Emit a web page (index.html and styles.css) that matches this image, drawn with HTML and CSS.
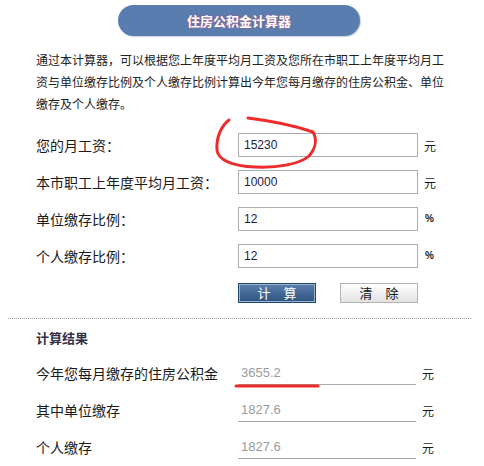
FILE: index.html
```html
<!DOCTYPE html>
<html lang="zh-CN">
<head>
  <meta charset="UTF-8">
  <title>住房公积金计算器</title>
  <link rel="stylesheet" href="styles.css">
</head>
<body>

<div class="calc">
  <div class="calc-title">住房公积金计算器</div>

  <p class="intro">通过本计算器，可以根据您上年度平均月工资及您所在市职工上年度平均月工资与单位缴存比例及个人缴存比例计算出今年您每月缴存的住房公积金、单位缴存及个人缴存。</p>

  <div class="form">
    <label class="row-label" for="salary">您的月工资：</label>
    <input class="field" id="salary" type="text" value="15230">
    <span class="unit">元</span>

    <label class="row-label" for="avgSalary">本市职工上年度平均月工资：</label>
    <input class="field" id="avgSalary" type="text" value="10000">
    <span class="unit">元</span>

    <label class="row-label" for="unitRate">单位缴存比例：</label>
    <input class="field" id="unitRate" type="text" value="12">
    <span class="unit pct">%</span>

    <label class="row-label" for="personRate">个人缴存比例：</label>
    <input class="field" id="personRate" type="text" value="12">
    <span class="unit pct">%</span>
  </div>

  <div class="actions">
    <button class="btn btn-calc">计 算</button>
    <button class="btn btn-clear">清 除</button>
  </div>

  <div class="divider"></div>

  <div class="result-title">计算结果</div>

  <div class="form result">
    <span class="row-label">今年您每月缴存的住房公积金</span>
    <input class="out" type="text" value="3655.2" readonly>
    <span class="unit">元</span>

    <span class="row-label">其中单位缴存</span>
    <input class="out" type="text" value="1827.6" readonly>
    <span class="unit">元</span>

    <span class="row-label">个人缴存</span>
    <input class="out" type="text" value="1827.6" readonly>
    <span class="unit">元</span>
  </div>

  <!-- 手绘标注 -->
  <svg class="marks" width="484" height="466" viewBox="0 0 484 466">
    <path d="M229,120 C221,126 216,138 217,150 C218,160 232,166 255,167 C278,168 300,164 309,156 C316,148 317,139 313,132 C296,126 272,121 248,118" />
    <path d="M236,386 L318,386" />
  </svg>
</div>

</body>
</html>
```

FILE: styles.css
```css
body {
  margin: 0;
  background: #fff;
  color: #222;
  font-family: "Noto Sans CJK SC", "Liberation Sans", sans-serif;
}
.calc {
  position: relative;
  width: 484px;
  height: 466px;
  overflow: hidden;
}
.calc-title {
  width: 242px;
  height: 31px;
  margin: 5px 0 0 118px;
  border-radius: 16px;
  background: #5a7daf;
  box-shadow: 1px 1px 1px #c9d3e0;
  color: #fff;
  font-size: 13px;
  font-weight: bold;
  line-height: 31px;
  text-align: center;
  text-shadow: 0 0 2px #c2507a;
}
.intro {
  margin: 13px 0 0;
  padding: 0 36px;
  font-size: 12px;
  line-height: 22px;
}
.form {
  display: grid;
  grid-template-columns: 202px 180px auto;
  grid-auto-rows: 24px;
  column-gap: 0;
  row-gap: 13px;
  margin: 18px 0 0 36px;
  align-items: center;
}
.row-label {
  font-size: 14px;
  line-height: 24px;
  color: #1a1a1a;
}
.field {
  box-sizing: border-box;
  width: 180px;
  height: 24px;
  margin: 0;
  padding: 0 0 0 5px;
  border: 1px solid #a9aeb4;
  font-family: "Liberation Sans", sans-serif;
  font-size: 12px;
  color: #1c1c3c;
  outline: none;
}
.unit {
  padding-left: 6px;
  font-size: 12px;
  color: #1a1a1a;
}
.pct {
  padding-left: 7px;
  font-family: "Liberation Sans", sans-serif;
  font-size: 10px;
  font-weight: bold;
  margin-top: -2px;
}
.actions {
  display: flex;
  gap: 24px;
  margin: 15px 0 0 238px;
}
.btn {
  box-sizing: border-box;
  width: 78px;
  height: 20px;
  padding: 0;
  font-family: "Noto Sans CJK SC", sans-serif;
  font-size: 13px;
  line-height: 18px;
  letter-spacing: 5px;
  text-indent: 5px;
  cursor: pointer;
}
.btn-calc {
  border: 1px solid #1e4a70;
  background: linear-gradient(#5a80ae, #2e5381);
  box-shadow: inset 0 0 0 1px #9ab2cc;
  color: #fff;
}
.btn-clear {
  border: 1px solid #b4b4b4;
  background: linear-gradient(#ffffff, #e2e2e2);
  color: #111;
}
.divider {
  margin: 15px 13px 0 8px;
  border-top: 1px dotted #999;
}
.result-title {
  margin: 9px 0 0 36px;
  font-size: 13px;
  font-weight: bold;
  line-height: 20px;
  color: #352f45;
}
.result {
  margin-top: 13px;
  grid-template-columns: 202px 178px auto;
}
.out {
  box-sizing: border-box;
  width: 178px;
  height: 24px;
  margin: 0;
  padding: 0 0 0 3px;
  border: none;
  border-bottom: 1px solid #a9a9a9;
  font-family: "Liberation Sans", sans-serif;
  font-size: 13px;
  color: #9a9a9a;
  outline: none;
}
.marks {
  position: absolute;
  top: 0;
  left: 0;
  pointer-events: none;
}
.marks path {
  fill: none;
  stroke: #ee2b2b;
  stroke-width: 3;
  stroke-linecap: round;
  stroke-linejoin: round;
}
```
